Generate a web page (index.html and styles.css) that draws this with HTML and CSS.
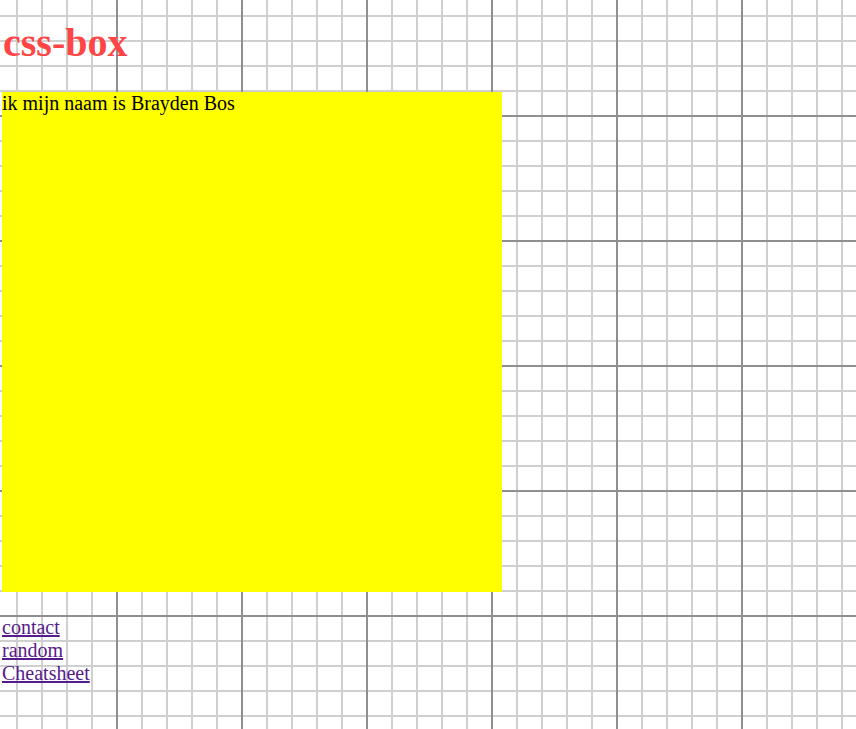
FILE: index.html
```html
<!DOCTYPE html>
<html lang="nl">
<head>
<meta charset="utf-8">
<title>css-box</title>
<link rel="stylesheet" href="styles.css">
</head>
<body>
<h1 class="title">css-box</h1>
<div class="box">ik mijn naam is Brayden Bos</div>
<nav class="links">
<a href="#contact">contact</a><br>
<a href="#random">random</a><br>
<a href="#cheatsheet">Cheatsheet</a>
</nav>
</body>
</html>
```

FILE: styles.css
```css
html {
  background-color: #fff;
  background-image:
    linear-gradient(to right, #8f8f8f 2px, transparent 2px),
    linear-gradient(to bottom, #8f8f8f 2px, transparent 2px),
    linear-gradient(to right, #cfcfcf 2px, transparent 2px),
    linear-gradient(to bottom, #cfcfcf 2px, transparent 2px);
  background-size: 125px 125px, 125px 125px, 25px 25px, 25px 25px;
  background-position: 116px 0, 0 115px, 16px 0, 0 15px;
}

body {
  margin: 0;
  padding: 0 2px;
  font-family: "Liberation Serif", "Times New Roman", serif;
  font-size: 20px;
  color: #000;
}

.title {
  font-size: 40px;
  font-weight: bold;
  color: #ff4545;
  margin: 19px 0 26px;
  padding-left: 1px;
}

.box {
  width: 500px;
  height: 500px;
  background: #ffff00;
}

.links {
  margin-top: 24px;
}

.links a {
  color: #551a8b;
}
```
